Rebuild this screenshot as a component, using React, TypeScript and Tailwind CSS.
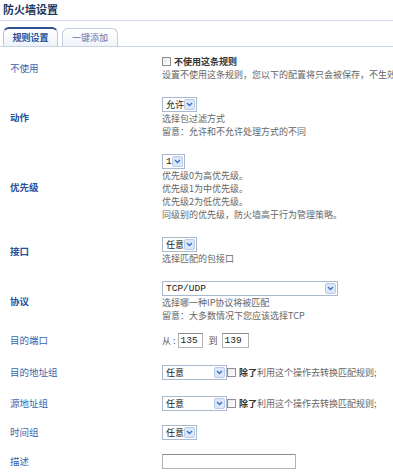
import React from 'react';

const cjk = '[font-family:"Noto_Sans_CJK_SC","Noto_Sans",sans-serif]';

function Arrow() {
  return (
    <span className="flex h-[11px] w-[11px] shrink-0 items-center justify-center rounded-[2px] border border-[#b9cbe6] bg-[#dce7f7]">
      <svg width="7" height="5" viewBox="0 0 7 5">
        <path d="M1 1 L3.5 3.5 L6 1" fill="none" stroke="#3d6fc4" strokeWidth="1.4" />
      </svg>
    </span>
  );
}

function Select({ value, w, mono }: { value: string; w: string; mono?: boolean }) {
  return (
    <div className={`flex h-[15px] shrink-0 items-center justify-between border border-[#aab9cf] bg-white pr-[1px] ${w}`}>
      <span
        className={`whitespace-nowrap pl-[3px] leading-none text-[#222] ${
          mono ? 'text-[9.5px] [font-family:"Liberation_Mono",monospace]' : 'text-[9px]'
        }`}
      >
        {value}
      </span>
      <Arrow />
    </div>
  );
}

function Checkbox() {
  return <span className="inline-block h-[9px] w-[9px] shrink-0 border border-[#8f8f8f] bg-gradient-to-br from-[#e9e9e9] to-white" />;
}

function Input({ value, w }: { value?: string; w: string }) {
  return (
    <div className={`flex h-[15px] items-center border border-[#b4b4b4] border-t-[#8e8e8e] bg-white pl-[2px] text-[9.5px] leading-none text-[#222] [font-family:"Liberation_Mono",monospace] ${w}`}>
      {value}
    </div>
  );
}

function Row({
  label,
  bold,
  pad = 'py-2',
  children,
}: {
  label: string;
  bold?: boolean;
  pad?: string;
  children: React.ReactNode;
}) {
  return (
    <div className={`flex items-center ${pad}`}>
      <div className={`w-[162px] shrink-0 pl-[10px] text-[9.5px] ${bold ? 'font-bold text-[#24509c]' : 'text-[#3a64ad]'}`}>
        {label}
      </div>
      <div className="flex min-w-0 flex-col items-start text-[9px] leading-[13px] text-[#666]">{children}</div>
    </div>
  );
}

export default function App() {
  return (
    <div className={`h-[473px] w-[393px] overflow-hidden bg-white ${cjk}`}>
      <div className="px-[3px] pt-[3px] text-[11px] font-bold leading-[13px] text-[#22375c]">防火墙设置</div>
      <div className="mt-[4px] h-px bg-[#d3dce8]" />

      <div className="mt-[6px] flex items-end border-b border-[#c9d4e2] pl-[3px]">
        <div className="flex h-[19px] w-[55px] items-center justify-center rounded-t-[6px] border border-b-0 border-[#b8c6d9] border-t-2 border-t-[#2d5193] bg-gradient-to-b from-white to-[#eef3fa] text-[9px] font-bold text-[#24509c]">
          规则设置
        </div>
        <div className="ml-[4px] flex h-[18px] w-[56px] items-center justify-center rounded-t-[6px] border border-b-0 border-[#c2cfe0] bg-gradient-to-b from-white to-[#f0f4f9] text-[9px] text-[#5878ae]">
          一键添加
        </div>
      </div>

      <div className="flex flex-col">
        <Row label="不使用">
          <div className="flex items-center gap-[3px]">
            <Checkbox />
            <span className="font-bold text-[#333]">不使用这条规则</span>
          </div>
          <div className="whitespace-nowrap">设置不使用这条规则，您以下的配置将只会被保存，不生效</div>
        </Row>

        <Row label="动作" bold>
          <Select value="允许" w="w-[35px]" />
          <div>选择包过滤方式</div>
          <div className="whitespace-nowrap">留意：允许和不允许处理方式的不同</div>
        </Row>

        <Row label="优先级" bold>
          <Select value="1" w="w-[23px]" mono />
          <div>优先级0为高优先级。</div>
          <div>优先级1为中优先级。</div>
          <div>优先级2为低优先级。</div>
          <div className="whitespace-nowrap">同级别的优先级，防火墙高于行为管理策略。</div>
        </Row>

        <Row label="接口" bold>
          <Select value="任意" w="w-[35px]" />
          <div>选择匹配的包接口</div>
        </Row>

        <Row label="协议" bold pad="pt-2 pb-[3px]">
          <Select value="TCP/UDP" w="w-[176px]" mono />
          <div>选择哪一种IP协议将被匹配</div>
          <div className="whitespace-nowrap">留意：大多数情况下您应该选择TCP</div>
        </Row>

        <Row label="目的端口">
          <div className="flex items-center text-[9px] text-[#555]">
            <span className="mr-[2px]">从 :</span>
            <Input value="135" w="w-[25px]" />
            <span className="ml-[6px] mr-[4px]">到</span>
            <Input value="139" w="w-[27px]" />
          </div>
        </Row>

        <Row label="目的地址组" pad="py-[9px]">
          <div className="flex items-center whitespace-nowrap">
            <Select value="任意" w="w-[65px]" />
            <Checkbox />
            <span className="ml-[3px] font-bold text-[#333]">除了</span>
            <span>利用这个操作去转换匹配规则;</span>
          </div>
        </Row>

        <Row label="源地址组" pad="py-[7px]">
          <div className="flex items-center whitespace-nowrap">
            <Select value="任意" w="w-[65px]" />
            <Checkbox />
            <span className="ml-[3px] font-bold text-[#333]">除了</span>
            <span>利用这个操作去转换匹配规则;</span>
          </div>
        </Row>

        <Row label="时间组" pad="py-[7px]">
          <Select value="任意" w="w-[35px]" />
        </Row>

        <Row label="描述" pad="py-[7px]">
          <Input w="w-[134px]" />
        </Row>
      </div>
    </div>
  );
}
